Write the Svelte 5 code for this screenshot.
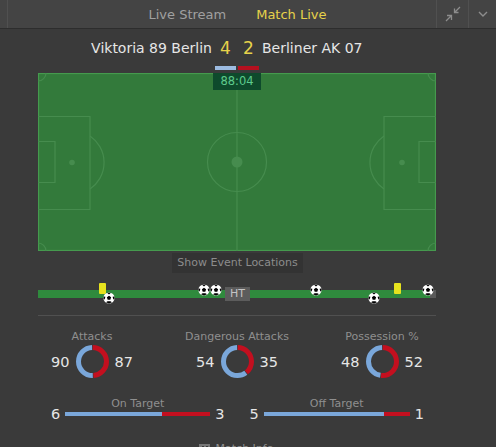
<script>
  const donuts = [
    { label: 'Attacks', home: 90, away: 87 },
    { label: 'Dangerous Attacks', home: 54, away: 35 },
    { label: 'Possession %', home: 48, away: 52 }
  ];
  const bars = [
    { label: 'On Target', home: 6, away: 3, blue: 97, red: 48 },
    { label: 'Off Target', home: 5, away: 1, blue: 120, red: 26 }
  ];
  const balls = [
    { x: 71, low: true },
    { x: 166 },
    { x: 178 },
    { x: 278 },
    { x: 336, low: true },
    { x: 390 }
  ];
  const cards = [61, 356];

  function share(d) {
    return (d.away / (d.home + d.away)) * 100;
  }
</script>

{#snippet ball()}
  <svg class="ball" viewBox="0 0 12 12" width="12" height="12">
    <circle cx="6" cy="6" r="5.6" fill="#fff" />
    <path d="M6 3.8 8.1 5.3 7.3 7.8H4.7L3.9 5.3Z" fill="#000" />
    <path d="M4 .8 8 .8 6 2.4ZM.5 4.6 2.4 4.8 1.6 7.6.6 7ZM11.5 4.6 9.6 4.8 10.4 7.6 11.4 7ZM3 10.2 4.6 9.2 7.4 9.2 9 10.2 6 11.6Z" fill="#000" />
  </svg>
{/snippet}

<div class="page">
  <header class="topbar">
    <div class="tabs">
      <span class="tab">Live Stream</span>
      <span class="tab active">Match Live</span>
    </div>
    <div class="tool">
      <svg viewBox="0 0 18 18" width="18" height="18" fill="none" stroke="#8d8d8d" stroke-width="1.3">
        <path d="M16 2 10.5 7.5M10.5 3.5V7.5H14.5" />
        <path d="M2 16 7.5 10.5M3 10.5H7.5V15" />
      </svg>
    </div>
    <div class="tool narrow">
      <svg viewBox="0 0 10 6" width="10" height="6" fill="none" stroke="#8d8d8d" stroke-width="1.4">
        <path d="M1 1 5 5 9 1" />
      </svg>
    </div>
  </header>

  <main class="content">
    <div class="teams">
      <span class="team home">Viktoria 89 Berlin</span>
      <span class="score">4</span>
      <span class="score">2</span>
      <span class="team away">Berliner AK 07</span>
    </div>
    <div class="colours">
      <span class="swatch blue"></span>
      <span class="swatch red"></span>
    </div>

    <div class="pitch">
      <svg viewBox="0 0 398 178" width="398" height="178" fill="none" stroke="#468c4e" stroke-width="1.2">
        <rect x="0.5" y="0.5" width="397" height="177" stroke="#459a4e" />
        <path d="M199 0V178" />
        <circle cx="199" cy="89" r="29.5" />
        <circle cx="199" cy="89" r="5.5" fill="#468c4e" stroke="none" />
        <path d="M0 43.5H52V136.5H0M0 68.5H17V109.5H0" />
        <path d="M52 63A32 32 0 0 1 52 116" />
        <circle cx="34" cy="89.5" r="2.8" fill="#468c4e" stroke="none" />
        <path d="M398 43.5H346V136.5H398M398 68.5H381V109.5H398" />
        <path d="M346 63A32 32 0 0 0 346 116" />
        <circle cx="364" cy="89.5" r="2.8" fill="#468c4e" stroke="none" />
        <path d="M0 8A8 8 0 0 0 8 0M390 0A8 8 0 0 0 398 8M0 170A8 8 0 0 1 8 178M390 178A8 8 0 0 1 398 170" />
      </svg>
      <div class="clock">88:04</div>
    </div>

    <div class="locations">Show Event Locations</div>

    <div class="timeline">
      <div class="track"></div>
      {#each cards as x}
        <span class="card" style="left: {x}px"></span>
      {/each}
      {#each balls as b}
        <span class="ball-pos" class:low={b.low} style="left: {b.x - 6}px">{@render ball()}</span>
      {/each}
      <span class="ht">HT</span>
    </div>

    <div class="stats">
      <div class="donuts">
        {#each donuts as d}
          <div class="donut-stat">
            <div class="stat-label">{d.label}</div>
            <div class="donut-row">
              <span class="num left">{d.home}</span>
              <svg viewBox="0 0 33 33" width="33" height="33" fill="none" stroke-width="5">
                <circle class="ring" cx="16.5" cy="16.5" r="14" pathLength="100" stroke="#7aa7da"
                  stroke-dasharray="{100 - share(d) - 1} 100" stroke-dashoffset="{-share(d) - 0.5}" />
                <circle class="ring" cx="16.5" cy="16.5" r="14" pathLength="100" stroke="#c30f1f"
                  stroke-dasharray="{share(d) - 0.5} 100" stroke-dashoffset="-0.25" />
              </svg>
              <span class="num">{d.away}</span>
            </div>
          </div>
        {/each}
      </div>

      <div class="bars">
        {#each bars as b}
          <div class="bar-stat">
            <span class="num">{b.home}</span>
            <div class="bar-mid">
              <div class="stat-label">{b.label}</div>
              <div class="bar-line">
                <span class="fill blue" style="width: {b.blue}px"></span>
                <span class="fill red" style="width: {b.red}px"></span>
              </div>
            </div>
            <span class="num">{b.away}</span>
          </div>
        {/each}
      </div>

      <div class="info">
        <svg viewBox="0 0 11 10" width="11" height="10">
          <path d="M0 0H11V10H0ZM3 2V4H5V2ZM7 2V4H9V2Z" fill="#777" fill-rule="evenodd" />
        </svg>
        <span>Match Info</span>
      </div>
    </div>
  </main>
</div>

<style>
  :global(body) {
    margin: 0;
    background: #3a3a3a;
  }

  .page {
    width: 496px;
    height: 447px;
    overflow: hidden;
    background: #3a3a3a;
    font-family: Tahoma, "DejaVu Sans", sans-serif;
    font-size: 12px;
    color: #ddd;
  }

  .topbar {
    display: flex;
    height: 28px;
    padding-left: 7px;
    background: #444;
    border-bottom: 1px solid #2d2d2d;
  }

  .tabs {
    flex: 1;
    display: flex;
    gap: 30px;
    justify-content: center;
    align-items: center;
    padding-left: 31px;
    border-left: 1px solid #505050;
    font-size: 13px;
    color: #a0a0a0;
  }

  .active {
    color: #e7d24a;
  }

  .tool {
    width: 31px;
    display: flex;
    align-items: center;
    justify-content: center;
    border-left: 1px solid #505050;
  }

  .narrow {
    width: 27px;
  }

  .content {
    width: 398px;
    margin-left: 38px;
  }

  .teams {
    display: grid;
    grid-template-columns: 1fr 23px 23px 1fr;
    align-items: center;
    height: 37px;
    font-size: 14px;
    color: #e6e6e6;
  }

  .home {
    text-align: right;
    padding-right: 2px;
  }

  .away {
    padding-left: 2px;
  }

  .team {
    white-space: nowrap;
  }

  .score {
    text-align: center;
    font-size: 17px;
    color: #e7d24a;
  }

  .colours {
    display: flex;
    justify-content: center;
    gap: 2px;
    height: 7px;
  }

  .swatch {
    width: 21px;
    height: 4px;
  }

  .swatch.blue {
    background: #9cbbe0;
  }

  .swatch.red {
    background: #b5101f;
  }

  .pitch {
    position: relative;
    height: 178px;
    background: #337a3b;
  }

  .pitch svg {
    display: block;
  }

  .clock {
    position: absolute;
    top: 0;
    left: 175px;
    width: 48px;
    height: 17px;
    line-height: 17px;
    text-align: center;
    font-size: 11.5px;
    color: #5ecb8d;
    background: #0e4a2c;
  }

  .locations {
    width: 131px;
    height: 20px;
    margin: 2px 0 0 134px;
    line-height: 20px;
    text-align: center;
    white-space: nowrap;
    font-size: 11px;
    color: #8c8c8c;
    background: #333;
  }

  .timeline {
    position: relative;
    height: 28px;
    margin-top: 10px;
    border-bottom: 1px solid #505050;
    padding-bottom: 4px;
  }

  .track {
    position: absolute;
    top: 7px;
    left: 0;
    right: 0;
    height: 8px;
    background: linear-gradient(to right, #2f8a3d 392px, #5a5a5a 392px);
  }

  .card {
    position: absolute;
    top: 0;
    width: 7px;
    height: 11px;
    border-radius: 1px;
    background: #e6e21e;
  }

  .ball-pos {
    position: absolute;
    top: 1px;
    line-height: 0;
  }

  .ball-pos.low {
    top: 9px;
  }

  .ht {
    position: absolute;
    top: 4px;
    left: 187px;
    width: 25px;
    height: 14px;
    line-height: 14px;
    text-align: center;
    font-size: 11px;
    color: #c4c4c4;
    background: #5c5c5c;
  }

  .donuts {
    display: grid;
    grid-template-columns: 108px 182px 108px;
    padding-top: 14px;
  }

  .donut-stat {
    display: flex;
    flex-direction: column;
    align-items: center;
  }

  .stat-label {
    font-size: 11px;
    line-height: 14px;
    color: #8f8f8f;
    text-align: center;
    white-space: nowrap;
  }

  .donut-row {
    display: flex;
    align-items: center;
    gap: 6px;
    margin-top: 1px;
  }

  .ring {
    transform: rotate(-90deg);
    transform-origin: center;
  }

  .num {
    width: 20px;
    font-size: 14.5px;
    color: #e6e6e6;
  }

  .left {
    text-align: right;
  }

  .bars {
    display: flex;
    gap: 25px;
    margin-top: 19px;
    padding-left: 13px;
  }

  .bar-stat {
    display: flex;
    align-items: flex-end;
    gap: 5px;
  }

  .bar-stat .num {
    width: auto;
    line-height: 18px;
  }

  .bar-line {
    display: flex;
    gap: 0;
    margin: 1px 0 7px;
  }

  .fill {
    height: 4px;
  }

  .fill.blue {
    background: #7aa7da;
  }

  .fill.red {
    background: #c30f1f;
  }

  .info {
    display: flex;
    align-items: center;
    justify-content: center;
    gap: 6px;
    margin-top: 19px;
    padding-right: 2px;
    font-size: 11px;
    color: #8f8f8f;
  }
</style>
